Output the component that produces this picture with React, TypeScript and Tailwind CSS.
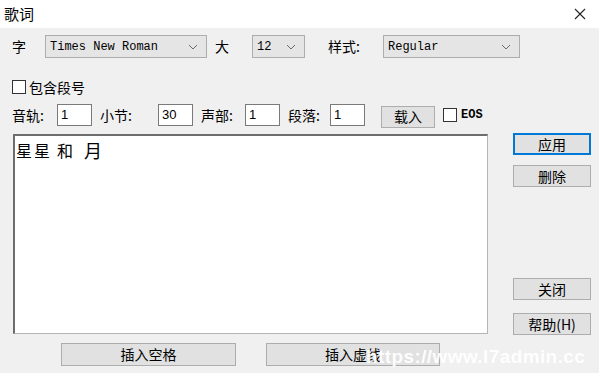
const cjk = { fontFamily: '"Noto Sans CJK SC", "Noto Sans", sans-serif' };
const mono = { fontFamily: '"Liberation Mono", "DejaVu Sans Mono", monospace' };

function Chevron() {
  return (
    <svg width="10" height="6" viewBox="0 0 10 6" className="shrink-0">
      <path d="M1 1 L5 5 L9 1" fill="none" stroke="#6b6b6b" strokeWidth="1" />
    </svg>
  );
}

function Select({ value, width }: { value: string; width: string }) {
  return (
    <div
      className={`${width} h-[23px] flex items-center justify-between bg-[#e5e5e5] border border-[#adadad] pl-[4px] pr-[8px] text-[12px] text-black`}
      style={mono}
    >
      <span>{value}</span>
      <Chevron />
    </div>
  );
}

function Field({ value }: { value: string }) {
  return (
    <div
      className="w-[35px] h-[22px] bg-white border border-[#7a7a7a] flex items-center pl-[3px] text-[13px] text-black"
      style={{ fontFamily: '"Liberation Sans", sans-serif' }}
    >
      {value}
    </div>
  );
}

function Btn({ label, className = "", focused = false }: { label: string; className?: string; focused?: boolean }) {
  return (
    <div
      className={`flex items-center justify-center bg-[#e1e1e1] text-[14px] text-black ${
        focused ? "border-2 border-[#0078d7]" : "border border-[#adadad]"
      } ${className}`}
    >
      {label}
    </div>
  );
}

export default function App() {
  return (
    <div className="relative w-[599px] h-[373px] bg-[#f0f0f0] overflow-hidden text-black" style={cjk}>
      {/* title bar */}
      <div className="h-[28px] bg-white flex items-center justify-between pl-[4px] pr-[13px]">
        <span className="text-[15px]">歌词</span>
        <svg width="12" height="12" viewBox="0 0 12 12">
          <path d="M1 1 L11 11 M11 1 L1 11" stroke="#222" strokeWidth="1.1" />
        </svg>
      </div>

      {/* font row */}
      <div className="mt-[7px] h-[23px] flex items-center pl-[12px] text-[14px]">
        <span className="w-[33px]">字</span>
        <Select value="Times New Roman" width="w-[162px]" />
        <span className="ml-[8px] w-[37px]">大</span>
        <Select value="12" width="w-[53px]" />
        <span className="ml-[23px] w-[55px]">样式:</span>
        <Select value="Regular" width="w-[137px]" />
      </div>

      {/* checkbox row */}
      <div className="mt-[22px] h-[14px] flex items-center pl-[12px] text-[14px]">
        <div className="w-[14px] h-[14px] border border-[#333] bg-white" />
        <span className="ml-[3px]">包含段号</span>
      </div>

      {/* numbers row */}
      <div className="mt-[9px] h-[24px] flex items-center pl-[12px] text-[14px]">
        <span className="w-[45px]">音轨:</span>
        <Field value="1" />
        <span className="ml-[8px] w-[58px]">小节:</span>
        <Field value="30" />
        <span className="ml-[8px] w-[44px]">声部:</span>
        <Field value="1" />
        <span className="ml-[8px] w-[42px]">段落:</span>
        <Field value="1" />
        <Btn label="载入" className="ml-[16px] w-[54px] h-[22px] mt-[3px]" />
        <div className="ml-[8px] w-[14px] h-[14px] border border-[#333] bg-white" />
        <span className="ml-[4px] text-[12px] font-bold" style={mono}>EOS</span>
      </div>

      {/* body */}
      <div className="mt-[6px] flex">
        <div className="w-[500px]">
          <div className="ml-[13px] mt-[1px] w-[475px] h-[200px] bg-white border border-[#b5b5b5] border-t-2 border-l-2 border-t-[#6d6d6d] border-l-[#6d6d6d] pl-[1px] pt-[3px]">
            <div className="flex items-end text-[16px] leading-[22px]">
              <span>星</span>
              <span className="ml-[2px]">星</span>
              <span className="ml-[7px]">和</span>
              <span className="ml-[11px] text-[18px]">月</span>
            </div>
          </div>
          <div className="mt-[9px] flex">
            <Btn label="插入空格" className="ml-[61px] w-[175px] h-[23px]" />
            <Btn label="插入虚线" className="ml-[30px] w-[174px] h-[23px]" />
          </div>
        </div>
        <div className="ml-[13px] flex flex-col">
          <Btn label="应用" focused className="w-[78px] h-[22px]" />
          <Btn label="删除" className="mt-[10px] w-[78px] h-[22px]" />
          <Btn label="关闭" className="mt-[91px] w-[78px] h-[22px]" />
          <Btn label="帮助(H)" className="mt-[13px] w-[78px] h-[22px]" />
        </div>
      </div>

      {/* watermark */}
      <div
        className="absolute left-[366px] top-[344px] whitespace-nowrap text-white font-bold text-[19px] tracking-[0.4px] leading-[26px] opacity-95"
        style={{ fontFamily: '"Liberation Sans", Arial, sans-serif' }}
      >
        https://www.l7admin.cc
      </div>
    </div>
  );
}
